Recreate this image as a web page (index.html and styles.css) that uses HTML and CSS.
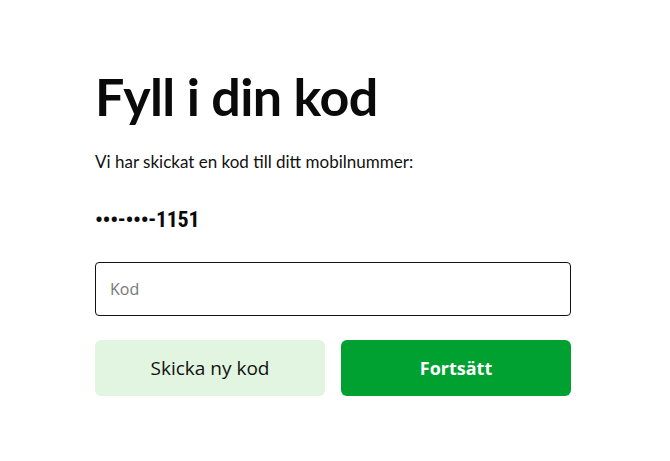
FILE: index.html
```
<!DOCTYPE html>
<html lang="sv">
<head>
<meta charset="utf-8">
<link rel="stylesheet" href="styles.css">
</head>
<body>
<main class="page">
  <h1 class="title">Fyll i din kod</h1>
  <p class="lead">Vi har skickat en kod till ditt mobilnummer:</p>
  <p class="phone">•••-•••-1151</p>
  <input class="code-input" type="text" placeholder="Kod">
  <div class="actions">
    <button class="btn btn-secondary" type="button">Skicka ny kod</button>
    <button class="btn btn-primary" type="button">Fortsätt</button>
  </div>
</main>
</body>
</html>
```
FILE: styles.css
```
* { box-sizing: border-box; }
html, body { margin: 0; padding: 0; background: #fff; }
body { font-family: "Lato", "Open Sans", sans-serif; color: #111; }
.page {
  width: 476px;
  margin-left: 95px;
  padding-top: 68px;
  display: flex;
  flex-direction: column;
}
.title {
  margin: 0;
  font-size: 52px;
  line-height: 56px;
  font-weight: 700;
  letter-spacing: -0.6px;
  color: #0a0a0a;
}
.lead {
  margin: 28px 0 0;
  font-size: 17px;
  line-height: 20px;
  color: #111;
}
.phone {
  margin: 36px 0 0;
  font-family: "Liberation Sans Narrow", "Roboto Condensed", "Lato", sans-serif;
  font-size: 22px;
  line-height: 24px;
  font-weight: 700;
  letter-spacing: -0.3px;
  color: #0a0a0a;
}
.code-input {
  margin-top: 30px;
  height: 54px;
  width: 100%;
  border: 1px solid #111;
  border-radius: 4px;
  padding: 0 14px;
  font-family: "Open Sans", sans-serif;
  font-size: 16px;
  color: #111;
  outline: none;
}
.code-input::placeholder { color: #777; }
.actions {
  margin-top: 24px;
  display: grid;
  grid-template-columns: 1fr 1fr;
  gap: 16px;
}
.btn {
  height: 56px;
  border: none;
  border-radius: 6px;
  font-family: "Open Sans", sans-serif;
  font-size: 19px;
  cursor: pointer;
}
.btn-secondary { background: #e2f5e0; color: #111; }
.btn-primary { background: #00a031; color: #fff; font-weight: 700; font-size: 18px; }
```
